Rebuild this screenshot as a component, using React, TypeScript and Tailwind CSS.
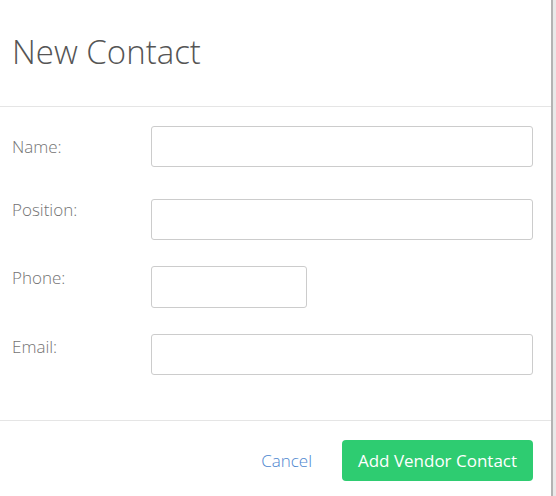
export default function App() {
  const font = { fontFamily: '"Open Sans", "Liberation Sans", sans-serif' }
  return (
    <div className="flex h-[496px] w-[556px] bg-[#e9e9e9]" style={font}>
      <div className="flex w-[553px] flex-col border-r-2 border-[#b3b3b3] bg-white">

        {/* Header */}
        <div className="h-[107px] border-b border-[#e5e5e5] px-[12px] pt-[33px]">
          <h1 className="text-[33px] font-light leading-[38px] text-[#555]">New Contact</h1>
        </div>

        {/* Body */}
        <div className="flex flex-col pl-[12px] pr-[18px] pt-[19px] pb-[45px] text-[17px] font-light leading-[24px] text-[#737373]">
          <div className="mb-[32px] flex">
            <label className="w-[139px] pt-[9px]">Name:</label>
            <input className="h-[41px] flex-1 rounded-[3px] border border-[#cccccc] outline-none" />
          </div>
          <div className="mb-[26px] flex">
            <label className="w-[139px] -mt-[1px]">Position:</label>
            <input className="h-[41px] flex-1 rounded-[3px] border border-[#cccccc] outline-none" />
          </div>
          <div className="mb-[26px] flex">
            <label className="w-[139px]">Phone:</label>
            <input className="h-[42px] w-[156px] rounded-[3px] border border-[#cccccc] outline-none" />
          </div>
          <div className="flex">
            <label className="w-[139px] pt-[1px]">Email:</label>
            <input className="h-[41px] flex-1 rounded-[3px] border border-[#cccccc] outline-none" />
          </div>
        </div>

        {/* Footer */}
        <div className="flex items-center justify-end gap-[30px] border-t border-[#e5e5e5] pr-[18px] pt-[19px]">
          <button className="text-[17px] font-light text-[#4d86cf]">Cancel</button>
          <button className="h-[41px] w-[191px] rounded-[4px] bg-[#2ecc71] text-[17px] text-white">
            Add Vendor Contact
          </button>
        </div>

      </div>
    </div>
  )
}
